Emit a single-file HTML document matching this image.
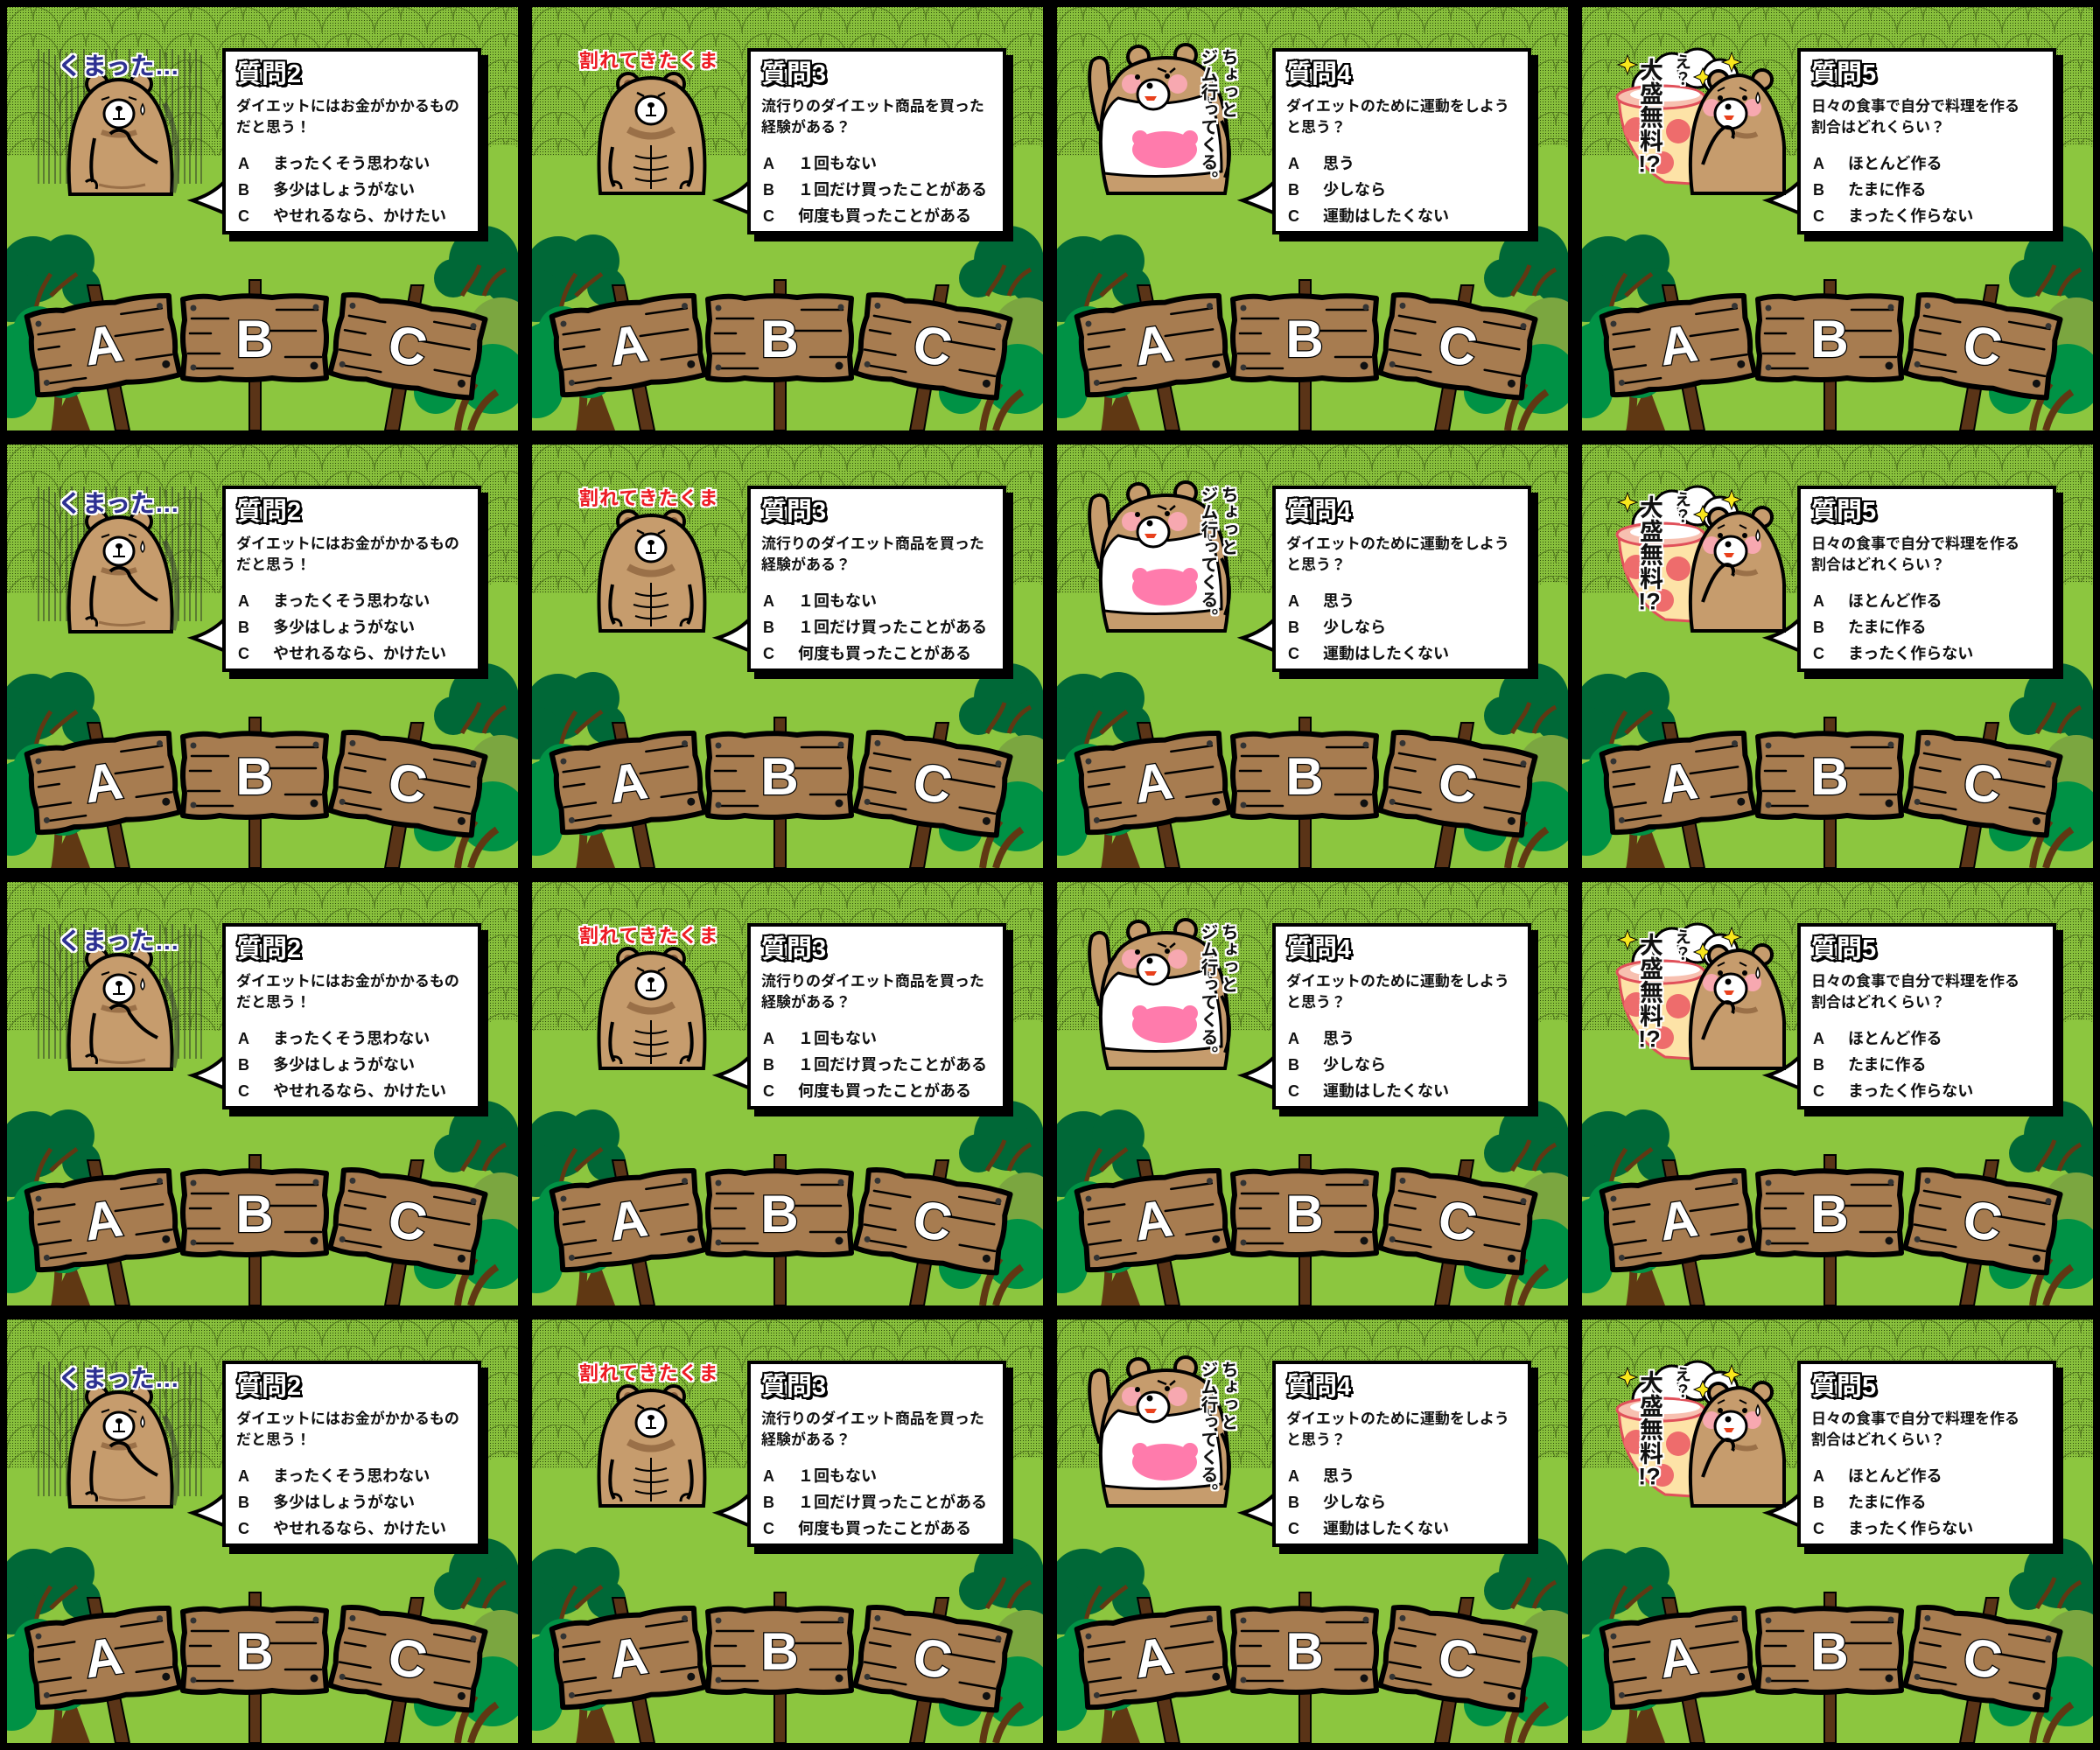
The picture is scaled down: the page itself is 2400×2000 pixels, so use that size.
<!DOCTYPE html>
<html><head><meta charset="utf-8">
<style>
html,body{margin:0;padding:0;background:#000;width:2400px;height:2000px;overflow:hidden}
.p{position:absolute;width:584px;height:484px;overflow:hidden}
.p>svg{position:absolute;left:0;top:0}
.f{font-family:"Liberation Sans","Noto Sans CJK JP",sans-serif;font-weight:bold}
.b{position:absolute;left:246px;top:47px;width:288px;height:205px;background:#fff;border:4px solid #000;box-shadow:8px 8px 0 #000;color:#111}
.t{position:absolute;left:12px;top:9px;font-size:29px;line-height:34px;color:#fff;text-shadow:-2px 0 #000,2px 0 #000,0 -2px #000,0 2px #000,-2px -2px #000,2px 2px #000,-2px 2px #000,2px -2px #000,3px 3px #000}
.q{position:absolute;left:12px;top:51px;font-size:17px;line-height:24px;white-space:nowrap}
.o{position:absolute;left:14px;font-size:18px;line-height:30px;white-space:nowrap}
.o span{display:inline-block;width:40px}
.o1{top:113px}.o2{top:143px}.o3{top:173px}
.lab{position:absolute;white-space:nowrap;text-shadow:-2px 0 #fff,2px 0 #fff,0 -2px #fff,0 2px #fff,-2px -2px #fff,2px 2px #fff,-2px 2px #fff,2px -2px #fff}
.l1{left:58px;top:50px;font-size:28px;line-height:36px;color:#2e3192}
.l2{left:54px;top:48px;font-size:22px;line-height:28px;color:#ed1c24;letter-spacing:1px}
.l3{left:160px;top:47px;font-size:20px;line-height:23px;writing-mode:vertical-rl;color:#111;height:170px}
.l4{left:62px;top:58px;font-size:27px;line-height:30px;writing-mode:vertical-rl;color:#111}
.l4b{left:102px;top:53px;font-size:19px;line-height:22px;writing-mode:vertical-rl;color:#111}
</style></head><body>
<svg width="0" height="0" style="position:absolute">
<defs>
<pattern id="dot" width="3" height="3" patternUnits="userSpaceOnUse"><rect width="3" height="3" fill="#88c03c"/><rect width="1" height="1" fill="#2d4a0c"/></pattern>
<pattern id="sc" width="60" height="30" patternUnits="userSpaceOnUse"><path d="M0 30A30 30 0 0 1 60 30M-30 15A30 30 0 0 1 30 15M30 15A30 30 0 0 1 90 15" fill="none" stroke="#3f5f14" stroke-width="1.3" opacity=".6"/></pattern>
<g id="brd">
<path d="M-82 -44 Q-60 -50 -40 -45 Q-10 -50 20 -46 Q50 -50 82 -45 L80 -20 Q84 0 80 20 L82 46 Q50 50 20 46 Q-10 50 -40 46 Q-60 50 -82 46 L-80 20 Q-84 0 -80 -20 Z" fill="#a77c50" stroke="#000" stroke-width="6" stroke-linejoin="round"/>
<path d="M-72 -22H-30M25 -32H72M-76 18H-40M35 22H76M-70 35H-25M15 -8H70M-74 -5H-50" stroke="#000" stroke-width="2.5" stroke-linecap="round"/>
<circle cx="-70" cy="-34" r="3.5" fill="#333"/><circle cx="70" cy="-35" r="3.5" fill="#333"/><circle cx="-70" cy="34" r="3.5" fill="#333"/><circle cx="68" cy="32" r="4.5" fill="#111"/>
</g>
</defs>
<symbol id="bg" viewBox="0 0 584 484">
<rect width="584" height="484" fill="#8cc63f"/>
<path d="M0 0H584V160Q560 152 540 166Q500 176 470 167L430 174Q380 164 340 172L250 170L0 170Z" fill="url(#dot)"/>
<path d="M0 0H584V160Q560 152 540 166Q500 176 470 167L430 174Q380 164 340 172L250 170L0 170Z" fill="url(#sc)"/>
<g>
<path d="M55 484C60 450 62 420 50 395M60 430C75 410 95 400 110 395M45 420C30 400 20 395 10 385" stroke="#603813" stroke-width="9" fill="none"/>
<path d="M50 484L75 430L95 484Z" fill="#603813"/>
<circle cx="30" cy="300" r="38" fill="#006837"/><circle cx="70" cy="290" r="30" fill="#006837"/><circle cx="5" cy="330" r="30" fill="#006837"/><circle cx="85" cy="320" r="22" fill="#006837"/>
<path d="M30 360C35 330 40 320 50 305M50 330C60 320 70 312 80 305" stroke="#603813" stroke-width="5" fill="none"/>
<circle cx="20" cy="400" r="40" fill="#009245"/><circle cx="65" cy="415" r="32" fill="#009245"/><circle cx="35" cy="370" r="28" fill="#009245"/><circle cx="5" cy="440" r="30" fill="#009245"/>
<circle cx="545" cy="290" r="40" fill="#006837"/><circle cx="575" cy="310" r="30" fill="#006837"/><circle cx="510" cy="310" r="22" fill="#006837"/>
<path d="M520 330C525 320 535 310 540 295M545 330C550 315 560 305 570 300" stroke="#603813" stroke-width="5" fill="none"/>
<circle cx="565" cy="370" r="38" fill="#7ba640"/>
<circle cx="510" cy="405" r="35" fill="#009245"/><circle cx="555" cy="425" r="40" fill="#009245"/><circle cx="490" cy="440" r="25" fill="#009245"/>
<path d="M515 484C518 460 525 445 535 430M530 484C535 465 545 450 560 440" stroke="#603813" stroke-width="8" fill="none"/>
</g>
<path d="M92 318H106L140 484H124Z" fill="#5a3417" stroke="#000" stroke-width="2"/>
<path d="M277 312H290V484H277Z" fill="#5a3417" stroke="#000" stroke-width="2"/>
<path d="M462 318H476L448 484H432Z" fill="#5a3417" stroke="#000" stroke-width="2"/>
<use href="#brd" transform="translate(110 386) rotate(-8)"/>
<use href="#brd" transform="translate(283 378)"/>
<use href="#brd" transform="translate(458 387) rotate(10)"/>
<path d="M252 196Q236 214 212 221Q236 230 254 238" fill="#fff" stroke="#000" stroke-width="4"/>
</symbol>
<symbol id="bear1" viewBox="0 0 584 484">
<g stroke="#222" stroke-width="1.2" opacity=".75">
<path d="M36 48V202M42 52V202M48 48V202M55 55V202M61 48V202M68 52V202M74 48V202M81 55V202M88 48V202M95 52V202M175 48V202M182 52V202M189 48V202M196 55V202M203 48V202M209 52V202M216 48V202M222 55V202M113 48V80M125 48V80M140 48V80M160 48V80"/>
</g>
<circle cx="103" cy="88" r="12" fill="#c69c6d" stroke="#000" stroke-width="4"/><circle cx="153" cy="88" r="12" fill="#c69c6d" stroke="#000" stroke-width="4"/>
<path d="M72 214C66 150 80 84 128 83C176 84 192 150 188 214Z" fill="#c69c6d" stroke="#000" stroke-width="4"/>
<path d="M180 110C195 140 198 180 190 212" stroke="#333" stroke-width="6" fill="none" opacity=".5"/>
<ellipse cx="128" cy="122" rx="17" ry="16" fill="#fff" stroke="#000" stroke-width="3"/>
<ellipse cx="128" cy="116" rx="4" ry="3"/><path d="M128 118V128M121 128H135" stroke="#000" stroke-width="2"/>
<path d="M108 106l9-3M139 103l9 3" stroke="#000" stroke-width="2"/>
<path d="M155 111q-4 8 0 12q4-4 0-12Z" fill="#fff" stroke="#000" stroke-width="1.5"/>
<path d="M108 143Q128 150 148 143" stroke="#9a7048" stroke-width="6" fill="none"/>
<path d="M100 150C96 170 95 185 98 200" stroke="#000" stroke-width="4" fill="none"/>
<path d="M118 145C125 138 138 140 140 150C150 165 160 172 172 178" stroke="#000" stroke-width="4" fill="none"/>
<path d="M90 200C95 195 105 198 102 208" stroke="#000" stroke-width="3" fill="none"/>
<path d="M105 203Q130 210 158 203" stroke="#9a7048" stroke-width="3" fill="none"/>
</symbol>
<symbol id="bear2" viewBox="0 0 584 484">
<circle cx="110" cy="88" r="12" fill="#c69c6d" stroke="#000" stroke-width="4"/><circle cx="162" cy="88" r="12" fill="#c69c6d" stroke="#000" stroke-width="4"/>
<circle cx="110" cy="88" r="5" fill="#8b5e3c"/><circle cx="162" cy="88" r="5" fill="#8b5e3c"/>
<path d="M78 213C72 140 82 82 136 81C190 82 202 140 196 213Z" fill="#c69c6d" stroke="#000" stroke-width="4"/>
<path d="M110 140Q136 155 162 140" stroke="#9a7048" stroke-width="8" fill="none"/>
<ellipse cx="136" cy="118" rx="17" ry="16" fill="#fff" stroke="#000" stroke-width="3"/>
<ellipse cx="136" cy="112" rx="4" ry="3"/><path d="M136 114V124M130 124H142" stroke="#000" stroke-width="2"/>
<path d="M120 98l8 4M152 98l-8 4" stroke="#000" stroke-width="2.5"/>
<path d="M136 158V208M118 170Q136 176 154 170M116 183Q136 189 156 183M118 196Q136 202 154 196" stroke="#000" stroke-width="2" fill="none"/>
<path d="M92 160C88 180 88 195 94 205M180 160C184 180 184 195 178 205" stroke="#000" stroke-width="4" fill="none"/>
<path d="M90 200q12 -2 12 8M182 200q-12 -2 -12 8" stroke="#000" stroke-width="3" fill="none"/>
</symbol>
<symbol id="bear3" viewBox="0 0 584 484">
<path d="M48 140C38 110 34 75 40 62C48 54 58 58 58 70L62 110L72 140Z" fill="#c69c6d" stroke="#000" stroke-width="4"/>
<circle cx="93" cy="57" r="12" fill="#c69c6d" stroke="#000" stroke-width="4"/><circle cx="147" cy="55" r="12" fill="#c69c6d" stroke="#000" stroke-width="4"/>
<path d="M58 213C46 170 46 110 66 85C82 52 158 48 176 80C196 110 200 170 192 213Z" fill="#c69c6d" stroke="#000" stroke-width="4"/>
<path d="M52 130Q60 110 70 104Q120 118 170 100Q188 125 188 188Q120 198 54 190Q48 160 52 130Z" fill="#fff" stroke="#000" stroke-width="3"/>
<ellipse cx="123" cy="163" rx="37" ry="21" fill="#ff7bac"/><circle cx="95" cy="150" r="9" fill="#ff7bac"/><circle cx="152" cy="150" r="9" fill="#ff7bac"/>
<circle cx="85" cy="88" r="11" fill="#f7a8b0"/><circle cx="138" cy="88" r="11" fill="#f7a8b0"/>
<ellipse cx="110" cy="100" rx="18" ry="17" fill="#fff" stroke="#000" stroke-width="3"/>
<circle cx="106" cy="90" r="3.5"/><path d="M100 102h14l-3 5h-8z" fill="#e8401c"/>
<circle cx="92" cy="80" r="3"/><circle cx="126" cy="79" r="3"/>
<path d="M115 70l10 4M135 70l-6 5" stroke="#000" stroke-width="2.5"/>
<path d="M188 130C198 150 200 175 192 195" stroke="#000" stroke-width="4" fill="none"/>
</symbol>
<symbol id="bear4" viewBox="0 0 584 484">
<g fill="#fff" stroke="#000" stroke-width="3"><circle cx="80" cy="92" r="22"/><circle cx="103" cy="75" r="22"/><circle cx="132" cy="70" r="22"/><circle cx="158" cy="80" r="20"/><circle cx="165" cy="98" r="15"/></g>
<path d="M42 100Q44 170 95 200L125 202Q140 185 140 105Z" fill="#fde3a7" stroke="#e0505a" stroke-width="3"/>
<ellipse cx="90" cy="103" rx="50" ry="13" fill="#f7c0b0" stroke="#e0505a" stroke-width="3"/>
<ellipse cx="95" cy="100" rx="40" ry="8" fill="#fff"/>
<circle cx="62" cy="140" r="14" fill="#ee6c6c"/><circle cx="110" cy="142" r="14" fill="#ee6c6c"/><circle cx="92" cy="178" r="13" fill="#ee6c6c"/>
<g fill="#f8e71c" stroke="#000" stroke-width="1"><path d="M52 55l3 8 8 3-8 3-3 8-3-8-8-3 8-3z"/><path d="M171 52l3 8 8 3-8 3-3 8-3-8-8-3 8-3z"/><path d="M138 70l3 7 7 3-7 3-3 7-3-7-7-3 7-3z"/></g>
<circle cx="156" cy="84" r="11" fill="#c69c6d" stroke="#000" stroke-width="4"/><circle cx="206" cy="83" r="11" fill="#c69c6d" stroke="#000" stroke-width="4"/>
<path d="M126 213C118 150 132 80 180 78C212 80 230 130 231 160V213Z" fill="#c69c6d" stroke="#000" stroke-width="4"/>
<circle cx="148" cy="115" r="10" fill="#f7a8b0"/><circle cx="195" cy="115" r="10" fill="#f7a8b0"/>
<ellipse cx="170" cy="122" rx="18" ry="17" fill="#fff" stroke="#000" stroke-width="3"/>
<circle cx="167" cy="114" r="3.5"/><path d="M162 124h12l-3 5h-6z" fill="#e8401c"/>
<circle cx="158" cy="104" r="3"/><circle cx="186" cy="104" r="3"/>
<path d="M155 96l8-4M180 92l8 4" stroke="#000" stroke-width="2"/>
<path d="M201 98q-4 8 0 12q4-4 0-12Z" fill="#fff" stroke="#000" stroke-width="1.5"/>
<path d="M138 180C145 160 152 145 162 138C172 134 175 145 172 150" stroke="#000" stroke-width="4" fill="none"/>
<path d="M175 145Q190 150 200 145" stroke="#9a7048" stroke-width="6" fill="none"/>
</symbol>
</svg>

<div class="p f" style="left:8px;top:8px"><svg width="584" height="484"><use href="#bg"/><use href="#bear1"/><g class="f" font-size="60" fill="#fff" stroke="#000" stroke-width="2.5" paint-order="stroke" text-anchor="middle"><text x="110" y="407" transform="rotate(-8 110 386)">A</text><text x="283" y="400">B</text><text x="458" y="408" transform="rotate(10 458 387)">C</text></g></svg><div class="lab l1">くまった…</div><div class="b"><div class="t">質問2</div><div class="q">ダイエットにはお金がかかるもの<br>だと思う！</div><div class="o o1"><span>A</span>まったくそう思わない</div><div class="o o2"><span>B</span>多少はしょうがない</div><div class="o o3"><span>C</span>やせれるなら、かけたい</div></div></div>
<div class="p f" style="left:608px;top:8px"><svg width="584" height="484"><use href="#bg"/><use href="#bear2"/><g class="f" font-size="60" fill="#fff" stroke="#000" stroke-width="2.5" paint-order="stroke" text-anchor="middle"><text x="110" y="407" transform="rotate(-8 110 386)">A</text><text x="283" y="400">B</text><text x="458" y="408" transform="rotate(10 458 387)">C</text></g></svg><div class="lab l2">割れてきたくま</div><div class="b"><div class="t">質問3</div><div class="q">流行りのダイエット商品を買った<br>経験がある？</div><div class="o o1"><span>A</span>１回もない</div><div class="o o2"><span>B</span>１回だけ買ったことがある</div><div class="o o3"><span>C</span>何度も買ったことがある</div></div></div>
<div class="p f" style="left:1208px;top:8px"><svg width="584" height="484"><use href="#bg"/><use href="#bear3"/><g class="f" font-size="60" fill="#fff" stroke="#000" stroke-width="2.5" paint-order="stroke" text-anchor="middle"><text x="110" y="407" transform="rotate(-8 110 386)">A</text><text x="283" y="400">B</text><text x="458" y="408" transform="rotate(10 458 387)">C</text></g></svg><div class="lab l3">ちょっと<br>ジム行ってくる。</div><div class="b"><div class="t">質問4</div><div class="q">ダイエットのために運動をしよう<br>と思う？</div><div class="o o1"><span>A</span>思う</div><div class="o o2"><span>B</span>少しなら</div><div class="o o3"><span>C</span>運動はしたくない</div></div></div>
<div class="p f" style="left:1808px;top:8px"><svg width="584" height="484"><use href="#bg"/><use href="#bear4"/><g class="f" font-size="60" fill="#fff" stroke="#000" stroke-width="2.5" paint-order="stroke" text-anchor="middle"><text x="110" y="407" transform="rotate(-8 110 386)">A</text><text x="283" y="400">B</text><text x="458" y="408" transform="rotate(10 458 387)">C</text></g></svg><div class="lab l4">大盛無料<span style="text-combine-upright:all">!?</span></div><div class="lab l4b">え？</div><div class="b"><div class="t">質問5</div><div class="q">日々の食事で自分で料理を作る<br>割合はどれくらい？</div><div class="o o1"><span>A</span>ほとんど作る</div><div class="o o2"><span>B</span>たまに作る</div><div class="o o3"><span>C</span>まったく作らない</div></div></div>

<div class="p f" style="left:8px;top:508px"><svg width="584" height="484"><use href="#bg"/><use href="#bear1"/><g class="f" font-size="60" fill="#fff" stroke="#000" stroke-width="2.5" paint-order="stroke" text-anchor="middle"><text x="110" y="407" transform="rotate(-8 110 386)">A</text><text x="283" y="400">B</text><text x="458" y="408" transform="rotate(10 458 387)">C</text></g></svg><div class="lab l1">くまった…</div><div class="b"><div class="t">質問2</div><div class="q">ダイエットにはお金がかかるもの<br>だと思う！</div><div class="o o1"><span>A</span>まったくそう思わない</div><div class="o o2"><span>B</span>多少はしょうがない</div><div class="o o3"><span>C</span>やせれるなら、かけたい</div></div></div>
<div class="p f" style="left:608px;top:508px"><svg width="584" height="484"><use href="#bg"/><use href="#bear2"/><g class="f" font-size="60" fill="#fff" stroke="#000" stroke-width="2.5" paint-order="stroke" text-anchor="middle"><text x="110" y="407" transform="rotate(-8 110 386)">A</text><text x="283" y="400">B</text><text x="458" y="408" transform="rotate(10 458 387)">C</text></g></svg><div class="lab l2">割れてきたくま</div><div class="b"><div class="t">質問3</div><div class="q">流行りのダイエット商品を買った<br>経験がある？</div><div class="o o1"><span>A</span>１回もない</div><div class="o o2"><span>B</span>１回だけ買ったことがある</div><div class="o o3"><span>C</span>何度も買ったことがある</div></div></div>
<div class="p f" style="left:1208px;top:508px"><svg width="584" height="484"><use href="#bg"/><use href="#bear3"/><g class="f" font-size="60" fill="#fff" stroke="#000" stroke-width="2.5" paint-order="stroke" text-anchor="middle"><text x="110" y="407" transform="rotate(-8 110 386)">A</text><text x="283" y="400">B</text><text x="458" y="408" transform="rotate(10 458 387)">C</text></g></svg><div class="lab l3">ちょっと<br>ジム行ってくる。</div><div class="b"><div class="t">質問4</div><div class="q">ダイエットのために運動をしよう<br>と思う？</div><div class="o o1"><span>A</span>思う</div><div class="o o2"><span>B</span>少しなら</div><div class="o o3"><span>C</span>運動はしたくない</div></div></div>
<div class="p f" style="left:1808px;top:508px"><svg width="584" height="484"><use href="#bg"/><use href="#bear4"/><g class="f" font-size="60" fill="#fff" stroke="#000" stroke-width="2.5" paint-order="stroke" text-anchor="middle"><text x="110" y="407" transform="rotate(-8 110 386)">A</text><text x="283" y="400">B</text><text x="458" y="408" transform="rotate(10 458 387)">C</text></g></svg><div class="lab l4">大盛無料<span style="text-combine-upright:all">!?</span></div><div class="lab l4b">え？</div><div class="b"><div class="t">質問5</div><div class="q">日々の食事で自分で料理を作る<br>割合はどれくらい？</div><div class="o o1"><span>A</span>ほとんど作る</div><div class="o o2"><span>B</span>たまに作る</div><div class="o o3"><span>C</span>まったく作らない</div></div></div>

<div class="p f" style="left:8px;top:1008px"><svg width="584" height="484"><use href="#bg"/><use href="#bear1"/><g class="f" font-size="60" fill="#fff" stroke="#000" stroke-width="2.5" paint-order="stroke" text-anchor="middle"><text x="110" y="407" transform="rotate(-8 110 386)">A</text><text x="283" y="400">B</text><text x="458" y="408" transform="rotate(10 458 387)">C</text></g></svg><div class="lab l1">くまった…</div><div class="b"><div class="t">質問2</div><div class="q">ダイエットにはお金がかかるもの<br>だと思う！</div><div class="o o1"><span>A</span>まったくそう思わない</div><div class="o o2"><span>B</span>多少はしょうがない</div><div class="o o3"><span>C</span>やせれるなら、かけたい</div></div></div>
<div class="p f" style="left:608px;top:1008px"><svg width="584" height="484"><use href="#bg"/><use href="#bear2"/><g class="f" font-size="60" fill="#fff" stroke="#000" stroke-width="2.5" paint-order="stroke" text-anchor="middle"><text x="110" y="407" transform="rotate(-8 110 386)">A</text><text x="283" y="400">B</text><text x="458" y="408" transform="rotate(10 458 387)">C</text></g></svg><div class="lab l2">割れてきたくま</div><div class="b"><div class="t">質問3</div><div class="q">流行りのダイエット商品を買った<br>経験がある？</div><div class="o o1"><span>A</span>１回もない</div><div class="o o2"><span>B</span>１回だけ買ったことがある</div><div class="o o3"><span>C</span>何度も買ったことがある</div></div></div>
<div class="p f" style="left:1208px;top:1008px"><svg width="584" height="484"><use href="#bg"/><use href="#bear3"/><g class="f" font-size="60" fill="#fff" stroke="#000" stroke-width="2.5" paint-order="stroke" text-anchor="middle"><text x="110" y="407" transform="rotate(-8 110 386)">A</text><text x="283" y="400">B</text><text x="458" y="408" transform="rotate(10 458 387)">C</text></g></svg><div class="lab l3">ちょっと<br>ジム行ってくる。</div><div class="b"><div class="t">質問4</div><div class="q">ダイエットのために運動をしよう<br>と思う？</div><div class="o o1"><span>A</span>思う</div><div class="o o2"><span>B</span>少しなら</div><div class="o o3"><span>C</span>運動はしたくない</div></div></div>
<div class="p f" style="left:1808px;top:1008px"><svg width="584" height="484"><use href="#bg"/><use href="#bear4"/><g class="f" font-size="60" fill="#fff" stroke="#000" stroke-width="2.5" paint-order="stroke" text-anchor="middle"><text x="110" y="407" transform="rotate(-8 110 386)">A</text><text x="283" y="400">B</text><text x="458" y="408" transform="rotate(10 458 387)">C</text></g></svg><div class="lab l4">大盛無料<span style="text-combine-upright:all">!?</span></div><div class="lab l4b">え？</div><div class="b"><div class="t">質問5</div><div class="q">日々の食事で自分で料理を作る<br>割合はどれくらい？</div><div class="o o1"><span>A</span>ほとんど作る</div><div class="o o2"><span>B</span>たまに作る</div><div class="o o3"><span>C</span>まったく作らない</div></div></div>

<div class="p f" style="left:8px;top:1508px"><svg width="584" height="484"><use href="#bg"/><use href="#bear1"/><g class="f" font-size="60" fill="#fff" stroke="#000" stroke-width="2.5" paint-order="stroke" text-anchor="middle"><text x="110" y="407" transform="rotate(-8 110 386)">A</text><text x="283" y="400">B</text><text x="458" y="408" transform="rotate(10 458 387)">C</text></g></svg><div class="lab l1">くまった…</div><div class="b"><div class="t">質問2</div><div class="q">ダイエットにはお金がかかるもの<br>だと思う！</div><div class="o o1"><span>A</span>まったくそう思わない</div><div class="o o2"><span>B</span>多少はしょうがない</div><div class="o o3"><span>C</span>やせれるなら、かけたい</div></div></div>
<div class="p f" style="left:608px;top:1508px"><svg width="584" height="484"><use href="#bg"/><use href="#bear2"/><g class="f" font-size="60" fill="#fff" stroke="#000" stroke-width="2.5" paint-order="stroke" text-anchor="middle"><text x="110" y="407" transform="rotate(-8 110 386)">A</text><text x="283" y="400">B</text><text x="458" y="408" transform="rotate(10 458 387)">C</text></g></svg><div class="lab l2">割れてきたくま</div><div class="b"><div class="t">質問3</div><div class="q">流行りのダイエット商品を買った<br>経験がある？</div><div class="o o1"><span>A</span>１回もない</div><div class="o o2"><span>B</span>１回だけ買ったことがある</div><div class="o o3"><span>C</span>何度も買ったことがある</div></div></div>
<div class="p f" style="left:1208px;top:1508px"><svg width="584" height="484"><use href="#bg"/><use href="#bear3"/><g class="f" font-size="60" fill="#fff" stroke="#000" stroke-width="2.5" paint-order="stroke" text-anchor="middle"><text x="110" y="407" transform="rotate(-8 110 386)">A</text><text x="283" y="400">B</text><text x="458" y="408" transform="rotate(10 458 387)">C</text></g></svg><div class="lab l3">ちょっと<br>ジム行ってくる。</div><div class="b"><div class="t">質問4</div><div class="q">ダイエットのために運動をしよう<br>と思う？</div><div class="o o1"><span>A</span>思う</div><div class="o o2"><span>B</span>少しなら</div><div class="o o3"><span>C</span>運動はしたくない</div></div></div>
<div class="p f" style="left:1808px;top:1508px"><svg width="584" height="484"><use href="#bg"/><use href="#bear4"/><g class="f" font-size="60" fill="#fff" stroke="#000" stroke-width="2.5" paint-order="stroke" text-anchor="middle"><text x="110" y="407" transform="rotate(-8 110 386)">A</text><text x="283" y="400">B</text><text x="458" y="408" transform="rotate(10 458 387)">C</text></g></svg><div class="lab l4">大盛無料<span style="text-combine-upright:all">!?</span></div><div class="lab l4b">え？</div><div class="b"><div class="t">質問5</div><div class="q">日々の食事で自分で料理を作る<br>割合はどれくらい？</div><div class="o o1"><span>A</span>ほとんど作る</div><div class="o o2"><span>B</span>たまに作る</div><div class="o o3"><span>C</span>まったく作らない</div></div></div>
</body></html>
